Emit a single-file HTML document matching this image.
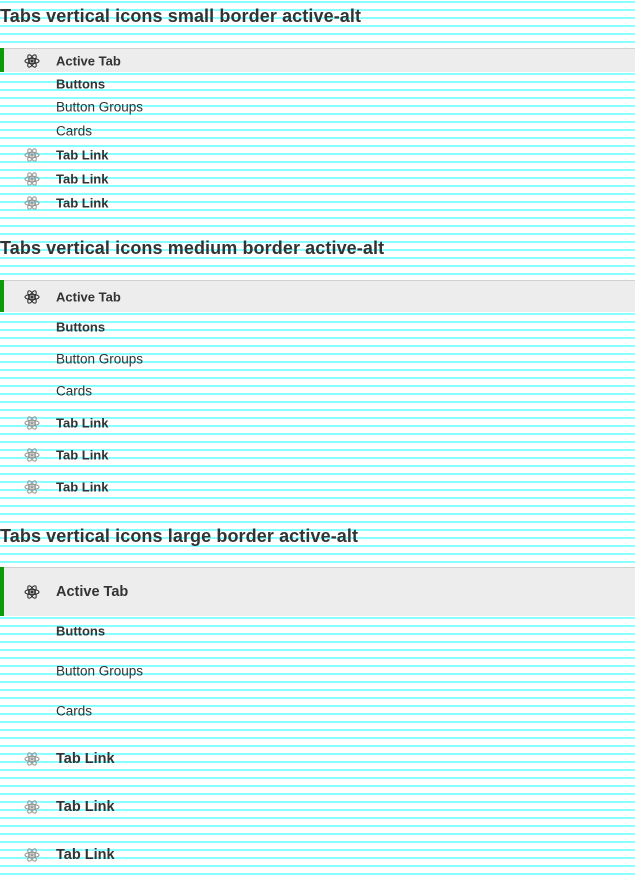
<!DOCTYPE html>
<html><head><meta charset="utf-8"><style>
html,body{margin:0;padding:0}
body{width:635px;height:880px;position:relative;overflow:hidden;font-family:"Liberation Sans",sans-serif;color:#333;
background-color:#fff;background-image:linear-gradient(to bottom,#fff 0px,#fff 1px,#8affff 1px,#8affff 3px,#fff 3px,#fff 8px);background-size:100% 8px;background-repeat:repeat;}
h2{position:absolute;left:0;margin:0;font-size:18px;font-weight:bold;letter-spacing:0.1px;line-height:22px;white-space:nowrap;color:#333}
.r{position:absolute;left:0;width:635px;}
.r.act{background:#ededed;border-top:1px solid #d0d0d0;box-sizing:border-box}
.r.act::before{content:"";position:absolute;left:0;top:-1px;bottom:0;width:4px;background:#0a9a0a}
.t{position:absolute;left:56px;top:50%;transform:translateY(-50%);font-size:13.5px;white-space:nowrap}
.b{font-weight:bold;font-size:13px}
.lg{font-size:14.5px}
svg{position:absolute;left:24px;top:50%;margin-top:-8px}
</style></head><body>
<svg width="0" height="0" style="position:absolute"><defs>
<g id="atom" fill="none" stroke-width="1.1">
<ellipse cx="8" cy="8" rx="7" ry="2.7"/>
<ellipse cx="8" cy="8" rx="7" ry="2.7" transform="rotate(60 8 8)"/>
<ellipse cx="8" cy="8" rx="7" ry="2.7" transform="rotate(120 8 8)"/>
<circle cx="8" cy="8" r="1.6" fill="currentColor" stroke="none"/>
</g></defs></svg>

<h2 style="top:5px">Tabs vertical icons small border active-alt</h2>
<div class="r act" style="top:48px;height:24px"><svg width="16" height="16" style="color:#333;stroke:#333"><use href="#atom"/></svg><div class="t b">Active Tab</div></div>
<div class="r" style="top:72px;height:23px"><div class="t b">Buttons</div></div>
<div class="r" style="top:95px;height:24px"><div class="t">Button Groups</div></div>
<div class="r" style="top:119px;height:24px"><div class="t">Cards</div></div>
<div class="r" style="top:143px;height:24px"><svg width="16" height="16" style="color:#999;stroke:#999"><use href="#atom"/></svg><div class="t b">Tab Link</div></div>
<div class="r" style="top:167px;height:24px"><svg width="16" height="16" style="color:#999;stroke:#999"><use href="#atom"/></svg><div class="t b">Tab Link</div></div>
<div class="r" style="top:191px;height:24px"><svg width="16" height="16" style="color:#999;stroke:#999"><use href="#atom"/></svg><div class="t b">Tab Link</div></div>

<h2 style="top:237px">Tabs vertical icons medium border active-alt</h2>
<div class="r act" style="top:280px;height:32px"><svg width="16" height="16" style="color:#333;stroke:#333"><use href="#atom"/></svg><div class="t b">Active Tab</div></div>
<div class="r" style="top:311px;height:32px"><div class="t b">Buttons</div></div>
<div class="r" style="top:343px;height:32px"><div class="t">Button Groups</div></div>
<div class="r" style="top:375px;height:32px"><div class="t">Cards</div></div>
<div class="r" style="top:407px;height:32px"><svg width="16" height="16" style="color:#999;stroke:#999"><use href="#atom"/></svg><div class="t b">Tab Link</div></div>
<div class="r" style="top:439px;height:32px"><svg width="16" height="16" style="color:#999;stroke:#999"><use href="#atom"/></svg><div class="t b">Tab Link</div></div>
<div class="r" style="top:471px;height:32px"><svg width="16" height="16" style="color:#999;stroke:#999"><use href="#atom"/></svg><div class="t b">Tab Link</div></div>

<h2 style="top:525px">Tabs vertical icons large border active-alt</h2>
<div class="r act" style="top:567px;height:49px"><svg width="16" height="16" style="color:#333;stroke:#333"><use href="#atom"/></svg><div class="t b lg">Active Tab</div></div>
<div class="r" style="top:611px;height:40px"><div class="t b">Buttons</div></div>
<div class="r" style="top:651px;height:40px"><div class="t">Button Groups</div></div>
<div class="r" style="top:691px;height:40px"><div class="t">Cards</div></div>
<div class="r" style="top:735px;height:48px"><svg width="16" height="16" style="color:#999;stroke:#999"><use href="#atom"/></svg><div class="t b lg">Tab Link</div></div>
<div class="r" style="top:783px;height:48px"><svg width="16" height="16" style="color:#999;stroke:#999"><use href="#atom"/></svg><div class="t b lg">Tab Link</div></div>
<div class="r" style="top:831px;height:48px"><svg width="16" height="16" style="color:#999;stroke:#999"><use href="#atom"/></svg><div class="t b lg">Tab Link</div></div>
</body></html>
